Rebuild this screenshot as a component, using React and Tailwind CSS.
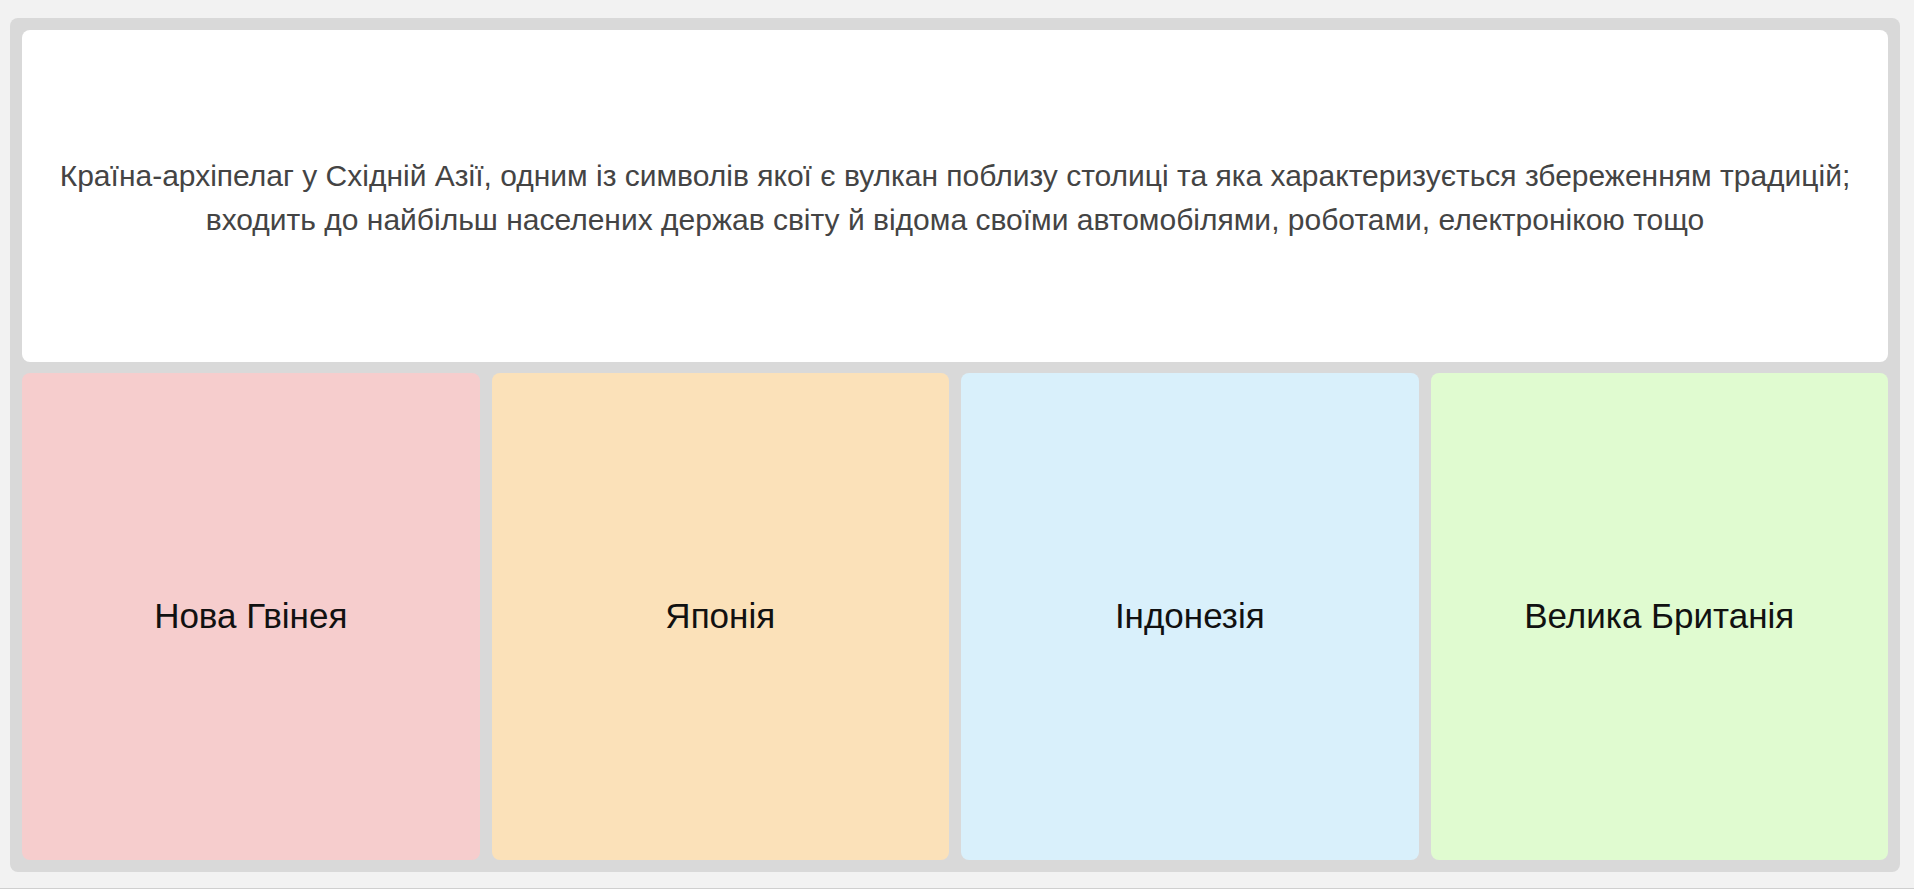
import React from 'react';

const options = [
  { label: 'Нова Гвінея', color: 'bg-[#f6cdcd]' },
  { label: 'Японія', color: 'bg-[#fbe1b9]' },
  { label: 'Індонезія', color: 'bg-[#d9f0fb]' },
  { label: 'Велика Британія', color: 'bg-[#e0fbd0]' },
];

const App = () => {
  return (
    <div className="min-h-[889px] bg-[#f2f2f2] border-b border-[#cfcfcf] pt-[18px] px-[10px] pb-[16px] font-['Liberation_Sans',Arial,sans-serif]">
      <div className="bg-[#d9d9d9] rounded-lg p-3 flex flex-col gap-[11px] h-[854px] w-[1890px]">
        <div className="bg-white rounded-lg h-[332px] flex items-center justify-center px-4 pt-1">
          <p className="text-center text-[#444444] text-[30px] leading-[44px]">
            Країна-архіпелаг у Східній Азії, одним із символів якої є вулкан поблизу столиці та яка характеризується збереженням традицій; входить до найбільш населених держав світу й відома своїми автомобілями, роботами, електронікою тощо
          </p>
        </div>
        <div className="flex-1 grid grid-cols-4 gap-3">
          {options.map((opt) => (
            <div
              key={opt.label}
              className={`${opt.color} rounded-lg flex items-center justify-center text-[35px] text-[#111111]`}
            >
              {opt.label}
            </div>
          ))}
        </div>
      </div>
    </div>
  );
};

export default App;
